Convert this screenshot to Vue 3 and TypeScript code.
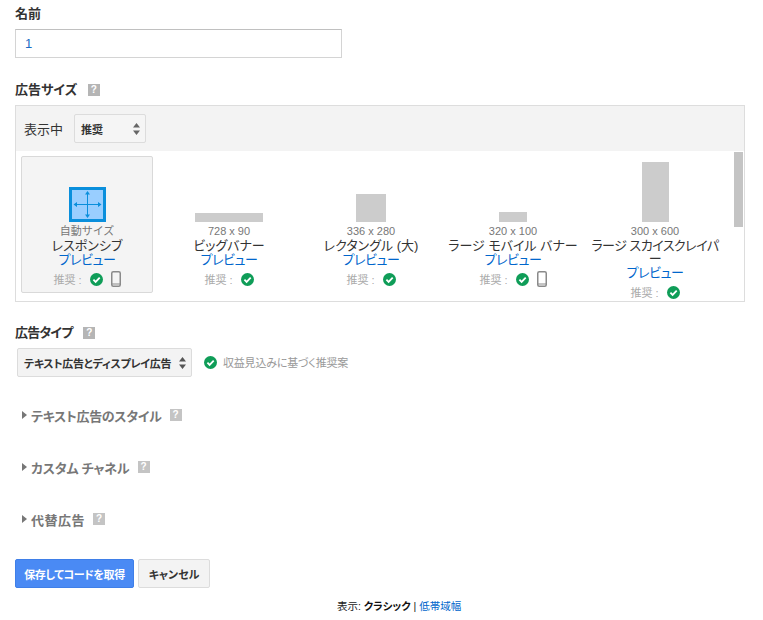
<script setup lang="ts">
interface Tile { key: string; w: number; h: number; dim: string; name: string; phone: boolean; responsive?: boolean; tight?: boolean }
const tiles: Tile[] = [
  { key: 'r', w: 37, h: 35, dim: '自動サイズ', name: 'レスポンシブ', phone: true, responsive: true },
  { key: 'a', w: 68, h: 9, dim: '728 x 90', name: 'ビッグバナー', phone: false },
  { key: 'b', w: 30, h: 28, dim: '336 x 280', name: 'レクタングル (大)', phone: false },
  { key: 'c', w: 28, h: 10, dim: '320 x 100', name: 'ラージ モバイル バナー', phone: true },
  { key: 'd', w: 27, h: 60, dim: '300 x 600', name: 'ラージ スカイスクレイパ\nー', phone: false, tight: true },
]
const collapsed = [
  { label: 'テキスト広告のスタイル', cls: 'narrow' },
  { label: 'カスタム チャネル', cls: 'slim' },
  { label: '代替広告', cls: 'wider' },
]
</script>

<template>
  <div class="page">
    <label class="title name-title">名前</label>
    <div class="text-input">1</div>

    <div class="title size-title">広告サイズ <span class="help">?</span></div>
    <div class="panel">
      <div class="panel-head">
        <span class="showing">表示中</span>
        <div class="select small">
          <span>推奨</span>
          <svg class="updown" width="7" height="12" viewBox="0 0 7 12"><path d="M3.5 0 7 4.5H0ZM3.5 12 0 7.5h7Z" fill="#666" /></svg>
        </div>
      </div>
      <div class="tiles">
        <div v-for="t in tiles" :key="t.key" class="tile" :class="{ selected: t.responsive }">
          <div class="thumb-area">
            <div v-if="t.responsive" class="resp-icon">
              <svg width="31" height="29" viewBox="0 0 31 29">
                <path d="M15.5 2v25M3 14.500h25" stroke="#0a8fdc" stroke-width="1" fill="none" />
                <path d="M15.500 1 18 4.500h-5ZM15.500 28 13 24.500h5ZM1.500 14.500 5 12v5ZM29.500 14.500 26 17v-5Z" fill="#0a8fdc" />
              </svg>
            </div>
            <div v-else class="thumb" :style="{ width: t.w + 'px', height: t.h + 'px' }"></div>
          </div>
          <div class="dim">{{ t.dim }}</div>
          <div class="tile-name" :class="{ tight: t.tight }">{{ t.name }}</div>
          <a class="preview">プレビュー</a>
          <div class="rec">
            <span class="rec-label">推奨 :</span>
            <svg class="check" width="13" height="13" viewBox="0 0 13 13"><circle cx="6.500" cy="6.500" r="6.500" fill="#0f9d58" /><path d="M3.400 6.700 5.600 8.900 9.700 4.600" stroke="#fff" stroke-width="1.800" fill="none" /></svg>
            <svg v-if="t.phone" class="phone" width="10" height="16" viewBox="0 0 10 16"><rect x=".75" y=".75" width="8.500" height="14.500" rx="1.500" fill="none" stroke="#8a8a8a" stroke-width="1.500" /><path d="M1 13h8" stroke="#8a8a8a" stroke-width="1" /></svg>
          </div>
        </div>
      </div>
      <div class="scrollbar"></div>
    </div>

    <div class="title type-title"><span class="type-label">広告タイプ</span> <span class="help">?</span></div>
    <div class="type-row">
      <div class="select wide">
        <span class="wide-label">テキスト広告とディスプレイ広告</span>
        <svg class="updown" width="7" height="12" viewBox="0 0 7 12"><path d="M3.500 0 7 4.500H0ZM3.500 12 0 7.500h7Z" fill="#555" /></svg>
      </div>
      <svg class="check type-check" width="13" height="13" viewBox="0 0 13 13"><circle cx="6.500" cy="6.500" r="6.500" fill="#0f9d58" /><path d="M3.400 6.700 5.600 8.900 9.700 4.600" stroke="#fff" stroke-width="1.800" fill="none" /></svg>
      <span class="hint">収益見込みに基づく推奨案</span>
    </div>

    <div class="collapsibles">
      <div v-for="c in collapsed" :key="c.label" class="collapsed">
        <svg width="5" height="8" viewBox="0 0 5 8"><path d="M0 0 5 4 0 8Z" fill="#777" /></svg>
        <span :class="c.cls">{{ c.label }}</span>
        <span class="help light">?</span>
      </div>
    </div>

    <div class="actions">
      <button class="btn primary">保存してコードを取得</button>
      <button class="btn cancel">キャンセル</button>
    </div>
    <div class="footer">表示: <b>クラシック</b> | <a>低帯域幅</a></div>
  </div>
</template>

<style scoped>
.page {
  width: 763px;
  height: 620px;
  box-sizing: border-box;
  padding: 6px 18px 0 15px;
  overflow: hidden;
  background: #fff;
  color: #333;
  font-family: "Liberation Sans", "Noto Sans CJK JP", sans-serif;
  font-feature-settings: "palt";
  font-size: 13px;
}
.title {
  display: block;
  font-weight: 700;
  font-size: 13px;
  line-height: 15px;
  color: #333;
}
.name-title { margin-bottom: 8px; }
.text-input {
  width: 327px;
  height: 29px;
  box-sizing: border-box;
  border: 1px solid #d4d4d4;
  border-top-color: #c0c0c0;
  padding: 0 9px;
  line-height: 28px;
  color: #1a6bc4;
  font-size: 13px;
}
.size-title { margin-top: 24px; margin-bottom: 8px; }
.help {
  display: inline-block;
  width: 12px;
  height: 12px;
  margin-left: 7px;
  background: #b5b5b5;
  color: #fff;
  font-size: 10px;
  line-height: 12px;
  text-align: center;
  font-weight: 700;
  vertical-align: 1px;
}
.help.light { background: #c4c4c4; margin-left: 4px; }
.panel {
  position: relative;
  width: 730px;
  height: 197px;
  box-sizing: border-box;
  border: 1px solid #ddd;
  overflow: hidden;
}
.panel-head {
  display: flex;
  align-items: center;
  height: 45px;
  box-sizing: border-box;
  padding: 0 8px;
  background: #f3f3f3;
}
.showing { font-size: 13px; color: #333; width: 50px; }
.select {
  display: flex;
  align-items: center;
  justify-content: space-between;
  box-sizing: border-box;
  height: 29px;
  border: 1px solid #dcdcdc;
  border-radius: 2px;
  background: #f5f5f5;
  font-weight: 700;
  font-size: 11px;
  color: #333;
  white-space: nowrap;
}
.select.small { width: 72px; padding: 0 5px 0 6px; }
.select.wide { width: 175px; padding: 0 5px 0 6px; background: #f3f3f3; }
.wide-label { letter-spacing: -0.3px; }
.tiles {
  display: flex;
  gap: 10px;
  padding: 5px 0 0 5px;
}
.tile {
  flex: 0 0 132px;
  box-sizing: border-box;
  height: 137px;
  border: 1px solid transparent;
  border-radius: 2px;
  text-align: center;
}
.tile.selected { background: #f4f4f4; border-color: #d9d9d9; }
.thumb-area {
  height: 65px;
  display: flex;
  align-items: flex-end;
  justify-content: center;
}
.thumb { background: #ccc; }
.resp-icon {
  width: 37px;
  height: 35px;
  box-sizing: border-box;
  border: 3px solid #0a8fdc;
  background: #99ceff;
  display: flex;
}
.dim {
  margin-top: 2px;
  font-size: 11px;
  line-height: 14px;
  color: #777;
  font-feature-settings: normal;
}
.tile-name {
  font-size: 13px;
  line-height: 13px;
  color: #333;
  margin-top: 1px;
  white-space: pre-line;
}
.tile-name.tight { letter-spacing: -0.5px; }
.preview {
  display: block;
  font-size: 13px;
  line-height: 14px;
  letter-spacing: -0.4px;
  color: #0066cc;
  margin-top: 1px;
}
.rec {
  display: flex;
  align-items: center;
  justify-content: center;
  height: 16px;
  margin-top: 4px;
}
.rec-label { font-size: 11px; color: #aaa; width: 36px; text-align: left; }
.phone { margin-left: 8px; }
.scrollbar {
  position: absolute;
  top: 46px;
  left: 718px;
  width: 9px;
  height: 75px;
  background: #c4c4c4;
  border: 0;
}
.type-title { margin-top: 23px; margin-bottom: 8px; }
.type-label { letter-spacing: -0.8px; }
.type-row {
  display: flex;
  align-items: center;
  padding-left: 2px;
}
.type-check { margin-left: 12px; }
.hint { margin: 0 0 2px 6px; font-size: 11px; color: #999; letter-spacing: -0.2px; }
.collapsibles { margin-top: 12px; }
.collapsed {
  display: flex;
  align-items: center;
  height: 52px;
  padding-left: 7px;
  gap: 4px;
  font-weight: 700;
  font-size: 13px;
  color: #777;
}
.narrow { letter-spacing: -0.3px; }
.slim { letter-spacing: -0.2px; }
.wider { letter-spacing: 0.5px; }
.actions {
  display: flex;
  gap: 4px;
  margin-top: 14px;
}
.btn {
  height: 29px;
  box-sizing: border-box;
  padding: 0;
  border: 1px solid #dcdcdc;
  border-radius: 2px;
  background: #f3f3f3;
  color: #333;
  font: 700 11px "Liberation Sans", "Noto Sans CJK JP", sans-serif;
  font-feature-settings: "palt";
  white-space: nowrap;
}
.btn.primary {
  width: 119px;
  background: #4a8af4;
  border-color: #3f7fe8;
  color: #fff;
  letter-spacing: -0.4px;
}
.btn.cancel { width: 72px; }
.footer {
  margin-top: 11px;
  padding-left: 322px;
  font-size: 10.5px;
  line-height: 14px;
  color: #222;
}
.footer a { color: #0066cc; }
.footer b { color: #111; }
</style>
